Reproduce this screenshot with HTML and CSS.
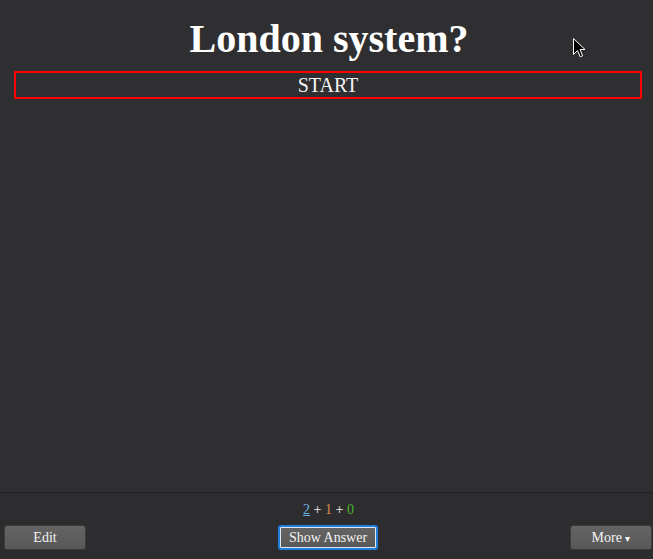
FILE: index.html
```html
<!DOCTYPE html>
<html>
<head>
<meta charset="utf-8">
<link rel="stylesheet" href="styles.css">
</head>
<body>
<main class="card">
  <h1 class="question">London system?</h1>
  <div class="start">START</div>
</main>
<footer class="bottombar">
  <div class="counts"><span class="new">2</span> + <span class="learn">1</span> + <span class="review">0</span></div>
  <div class="buttons">
    <button class="btn">Edit</button>
    <button class="btn primary">Show Answer</button>
    <button class="btn">More <span class="caret">▾</span></button>
  </div>
</footer>
<svg class="cursor" width="13" height="21" viewBox="0 0 13 21">
  <path d="M0.5 0.5 L0.5 16.5 L4.5 12.5 L7.2 18.8 L9.6 17.8 L7 11.5 L12 11.5 Z" fill="#000" stroke="#fff" stroke-width="1"/>
</svg>
</body>
</html>
```
FILE: styles.css
```css
html, body {
  margin: 0;
  padding: 0;
  height: 100%;
  background: #2f2f31;
  color: #fff;
  font-family: "Liberation Serif", "Times New Roman", serif;
  overflow: hidden;
}
body {
  display: flex;
  flex-direction: column;
  position: relative;
}
.card {
  flex: 1;
  padding: 14px 11px 0 14px;
  text-align: center;
}
.question {
  margin: 0 0 7px 0;
  font-size: 40px;
  line-height: 50px;
  font-weight: bold;
  padding-left: 2px;
}
.start {
  border: 2px solid #ff0000;
  font-size: 20px;
  line-height: 24px;
  color: #f4f4f4;
}
.bottombar {
  height: 66px;
  border-top: 1px solid #232325;
  background: #2d2d2f;
  display: flex;
  flex-direction: column;
}
.counts {
  text-align: center;
  font-size: 14px;
  line-height: 14px;
  margin-top: 10px;
  color: #ededed;
  padding-left: 4px;
}
.new { color: #6fb3e6; text-decoration: underline; }
.learn { color: #d98b4f; }
.review { color: #4bb32c; }
.buttons {
  margin-top: 8px;
  display: flex;
  justify-content: space-between;
  align-items: center;
  padding: 0 1px 0 4px;
}
.btn {
  font-family: "Liberation Serif", "Times New Roman", serif;
  font-size: 14px;
  color: #f4f4f4;
  background: linear-gradient(#646464, #585858);
  border: 1px solid #3c3c3c;
  border-radius: 3px;
  height: 25px;
  width: 82px;
  padding: 0;
}
.btn.primary {
  width: 100px;
  border: 2px solid #1e7fdc;
  box-shadow: inset 0 0 0 1px #dfe9f3;
}
.caret { font-size: 10px; }
.cursor {
  position: absolute;
  left: 573px;
  top: 38px;
}
```
